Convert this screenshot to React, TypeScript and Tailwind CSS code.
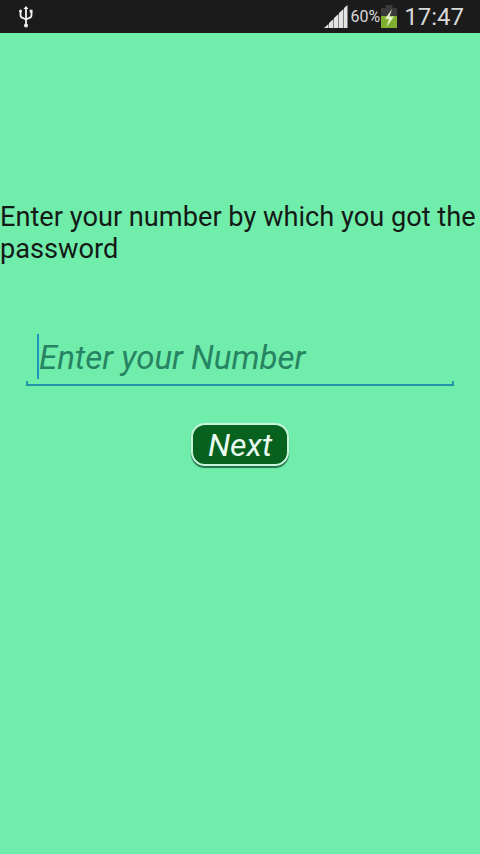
/**
 * Phone number entry screen with Android status bar
 */

function UsbIcon() {
  return (
    <svg width="16" height="22" viewBox="0 0 16 22" fill="none" stroke="#f2f2f2" strokeWidth="1.8">
      <path d="M8 2v17" />
      <path d="M2.500 6v3q0 2.500 2.500 3l3 1.500 3-1.500q2.500-.5 2.500-3V6" />
      <path d="M8 0l2.500 3h-5z" fill="#f2f2f2" stroke="none" />
      <circle cx="2.500" cy="5" r="1.500" fill="#f2f2f2" stroke="none" />
      <rect x="11.700" y="3.700" width="2.800" height="2.800" fill="#f2f2f2" stroke="none" />
      <circle cx="8" cy="19.500" r="2" fill="#f2f2f2" stroke="none" />
    </svg>
  );
}

function SignalIcon() {
  return (
    <svg width="24" height="24" viewBox="0 0 24 24" fill="#e4e4e4">
      <path d="M0 23l4.500-4v4z" />
      <path d="M5 23v-5l4.500-4v9z" />
      <path d="M10 23V13l4.500-4v14z" />
      <path d="M15 23V8l4.500-4v19z" />
      <path d="M20 23V3l3.500-3v23z" />
    </svg>
  );
}

function BatteryIcon() {
  return (
    <svg width="18" height="25" viewBox="0 0 18 25">
      <rect x="5.500" y="1" width="7" height="3" fill="#3a3a3a" />
      <rect x="1" y="4" width="16" height="9" fill="#3a3a3a" />
      <rect x="1" y="12" width="16" height="12" fill="#7fb02f" />
      <path d="M12 5L5 15h4l-2.500 8L14 12.500H9.500z" fill="#e6f2c8" />
    </svg>
  );
}

export default function App() {
  return (
    <div className="min-h-[854px] w-[480px] bg-[#70edab] font-['Roboto',sans-serif]">
      <div className="flex h-[33px] items-center bg-[#1b1b1b] pl-[18px] pr-4">
        <UsbIcon />
        <div className="ml-auto flex items-center">
          <SignalIcon />
          <span className="ml-[3px] text-[16px] leading-none text-[#d8d8d8]">60%</span>
          <BatteryIcon />
          <span className="ml-[6px] text-[24px] leading-none text-[#d8d8d8]">17:47</span>
        </div>
      </div>

      <p className="mt-[168px] text-[27.200px] leading-[32px] text-[#141a16]">
        Enter your number by which you got the password
      </p>

      <div className="relative mx-[26px] mt-[63px] flex h-[58px] items-center border-b-2 border-[#2294a8] pl-[11px]">
        <span className="h-[45px] w-[2px] bg-[#1d93c0]" />
        <span className="pt-[2px] text-[33px] italic leading-none text-[#278462]">Enter your Number</span>
        <span className="absolute bottom-[-2px] left-0 h-[5px] w-[2px] bg-[#2294a8]" />
        <span className="absolute bottom-[-2px] right-0 h-[5px] w-[2px] bg-[#2294a8]" />
      </div>

      <div className="mt-[37px] flex justify-center">
        <button className="flex h-[43px] w-[98px] items-center justify-center rounded-[14px] border-2 border-[#c6f5dc] bg-[#07611f] text-[32px] italic leading-none text-[#e9fbf0] shadow-[0_2px_1px_rgba(0,60,30,0.7)]">
          Next
        </button>
      </div>
    </div>
  );
}
